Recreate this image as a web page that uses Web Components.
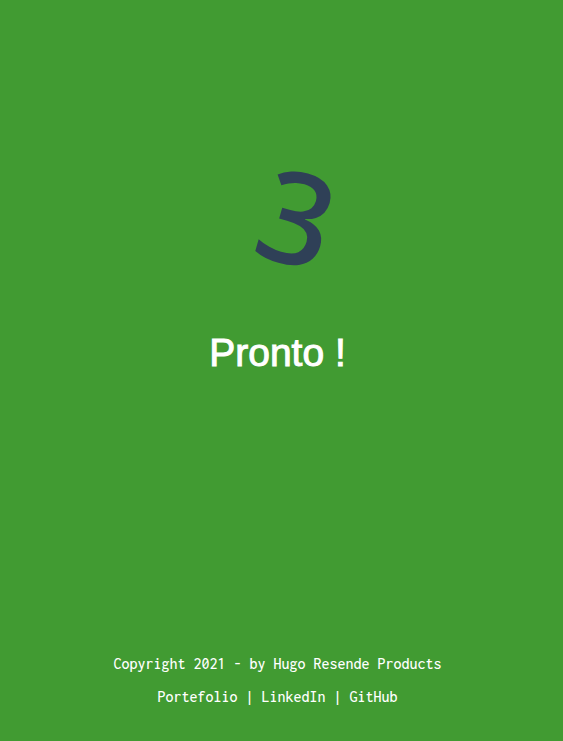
<!DOCTYPE html>
<html lang="pt">
<head>
<meta charset="utf-8">
<title>Contador</title>
<style>
html, body { height: 100%; margin: 0; }
body { background: #419b32; }
</style>
</head>
<body>
<countdown-page></countdown-page>
<script>
class CountNumber extends HTMLElement {
  constructor() {
    super();
    this.attachShadow({ mode: "open" }).innerHTML = `
      <style>
        :host { display: block; padding-left: 40px; color: #2f4057; font: 500 128px/160px "Noto Sans", sans-serif; }
        span { display: inline-block; transform: rotate(16deg); }
      </style><span><slot></slot></span>`;
  }
}
class StatusTitle extends HTMLElement {
  constructor() {
    super();
    this.attachShadow({ mode: "open" }).innerHTML = `
      <style>
        :host { display: block; }
        h1 { margin: 0; color: #fff; font: 400 39px/48px "Liberation Sans", Arial, sans-serif; -webkit-text-stroke: 1px #fff; }
      </style><h1><slot></slot></h1>`;
  }
}
class PageFooter extends HTMLElement {
  constructor() {
    super();
    this.attachShadow({ mode: "open" }).innerHTML = `
      <style>
        :host { display: block; color: #fff; font: 500 16px/17px Inconsolata, "DejaVu Sans Mono", monospace; }
        footer { display: grid; gap: 16px; text-align: center; }
        p { margin: 0; }
        a { color: inherit; text-decoration: none; }
      </style>
      <footer>
        <p>Copyright 2021 - by Hugo Resende Products</p>
        <p><a href="#portfolio">Portefolio</a> | <a href="#linkedin">LinkedIn</a> | <a href="#github">GitHub</a></p>
      </footer>`;
  }
}
class CountdownPage extends HTMLElement {
  constructor() {
    super();
    this.attachShadow({ mode: "open" }).innerHTML = `
      <style>
        :host { display: flex; flex-direction: column; align-items: center; box-sizing: border-box; min-height: 100%; padding: 136px 8px 36px 0; text-align: center; }
        main { display: grid; gap: 33px; }
        page-footer { margin-top: auto; }
      </style>
      <main>
        <count-number>3</count-number>
        <status-title>Pronto !</status-title>
      </main>
      <page-footer></page-footer>`;
  }
}
customElements.define("count-number", CountNumber);
customElements.define("status-title", StatusTitle);
customElements.define("page-footer", PageFooter);
customElements.define("countdown-page", CountdownPage);
</script>
</body>
</html>
